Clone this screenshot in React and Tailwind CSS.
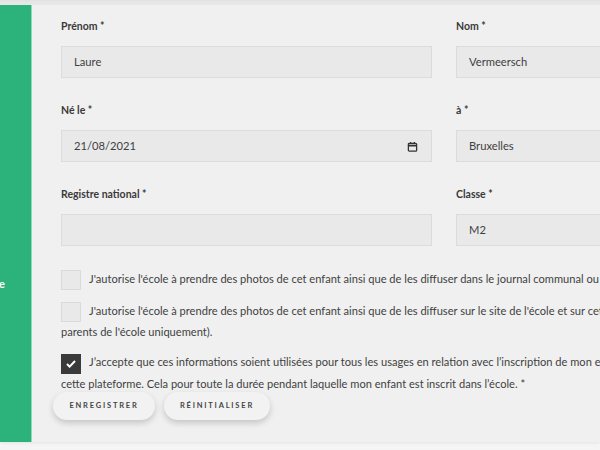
const Field = ({ label, value, icon }) => (
  <div>
    <div className="text-[10.5px] font-bold leading-[14px] text-[#3a3a3a]">{label}</div>
    <div className="mt-[13px] flex h-[32px] items-center justify-between border border-[#dcdcdc] bg-[#e9e9e9] pl-[12px] pr-[13px] text-[11.2px] text-[#3f3f3f]">
      <span>{value}</span>
      {icon && (
        <svg width="11" height="11" viewBox="0 0 12 12" fill="none" stroke="#333" strokeWidth="1.4">
          <rect x="1.5" y="2.5" width="9" height="8.5" rx="1" />
          <line x1="1.5" y1="5" x2="10.5" y2="5" strokeWidth="2" />
          <line x1="4" y1="1" x2="4" y2="3" />
          <line x1="8" y1="1" x2="8" y2="3" />
        </svg>
      )}
    </div>
  </div>
);

const Check = ({ checked }) => (
  <span
    className={
      checked
        ? 'mr-[8px] inline-flex h-[20px] w-[20px] items-center justify-center bg-[#3a3a3a] align-middle'
        : 'mr-[8px] inline-block h-[20px] w-[20px] border border-[#dadada] bg-[#e9e9e9] align-middle'
    }
  >
    {checked && (
      <svg width="10" height="8" viewBox="0 0 10 8" fill="none" stroke="#fff" strokeWidth="2">
        <path d="M1 4l2.6 2.6L9 1" />
      </svg>
    )}
  </span>
);

export default function App() {
  return (
    <div className="h-[450px] w-[600px] overflow-hidden bg-[#f5f5f5] font-['Lato','Liberation_Sans',sans-serif]">
      <div className="h-[5px] bg-gradient-to-b from-[#e2e2e2] to-[#ebebeb]" />
      <div className="flex h-[437px] shadow-[0_1px_3px_rgba(0,0,0,0.08)]">
        <div className="relative w-[32px] shrink-0 border-r border-[#8fd9b6] bg-[#2cb37b]">
          <span className="absolute right-[26px] top-[271px] whitespace-nowrap text-[11px] font-bold text-white">
            Inscrire
          </span>
        </div>
        <div className="flex-1 overflow-hidden bg-[#f0f0f0] pl-[29px] pt-[14px]">
          <div className="grid w-[766px] grid-cols-[371px_371px] gap-x-[24px] gap-y-[25px]">
            <Field label="Prénom *" value="Laure" />
            <Field label="Nom *" value="Vermeersch" />
            <Field label="Né le *" value="21/08/2021" icon />
            <Field label="à *" value="Bruxelles" />
            <Field label="Registre national *" value="" />
            <Field label="Classe *" value="M2" />
          </div>
          <div className="mt-[23px] whitespace-nowrap text-[11.1px] leading-[20px] text-[#3f3f3f]">
            <p>
              <Check />
              J'autorise l'école à prendre des photos de cet enfant ainsi que de les diffuser dans le journal communal ou sur les réseaux sociaux.
            </p>
            <p className="mt-[11px]">
              <Check />
              J'autorise l'école à prendre des photos de cet enfant ainsi que de les diffuser sur le site de l'école et sur cette plateforme (accessible aux
              <br />
              parents de l'école uniquement).
            </p>
            <p className="mt-[10px]">
              <Check checked />
              J’accepte que ces informations soient utilisées pour tous les usages en relation avec l’inscription de mon enfant à l’école et sur
              <br />
              cette plateforme. Cela pour toute la durée pendant laquelle mon enfant est inscrit dans l’école. *
            </p>
          </div>
          <div className="-ml-[8px] -mt-[2px] flex gap-[9px] pb-[23px]">
            <button className="h-[28px] w-[102px] rounded-full bg-[#f2f2f2] text-[7.5px] font-bold tracking-[1.8px] text-[#444] shadow-[0_3px_6px_rgba(0,0,0,0.18)]">
              ENREGISTRER
            </button>
            <button className="h-[28px] w-[106px] rounded-full bg-[#f2f2f2] text-[7.5px] font-bold tracking-[1.8px] text-[#444] shadow-[0_3px_6px_rgba(0,0,0,0.18)]">
              RÉINITIALISER
            </button>
          </div>
        </div>
      </div>
    </div>
  );
}
